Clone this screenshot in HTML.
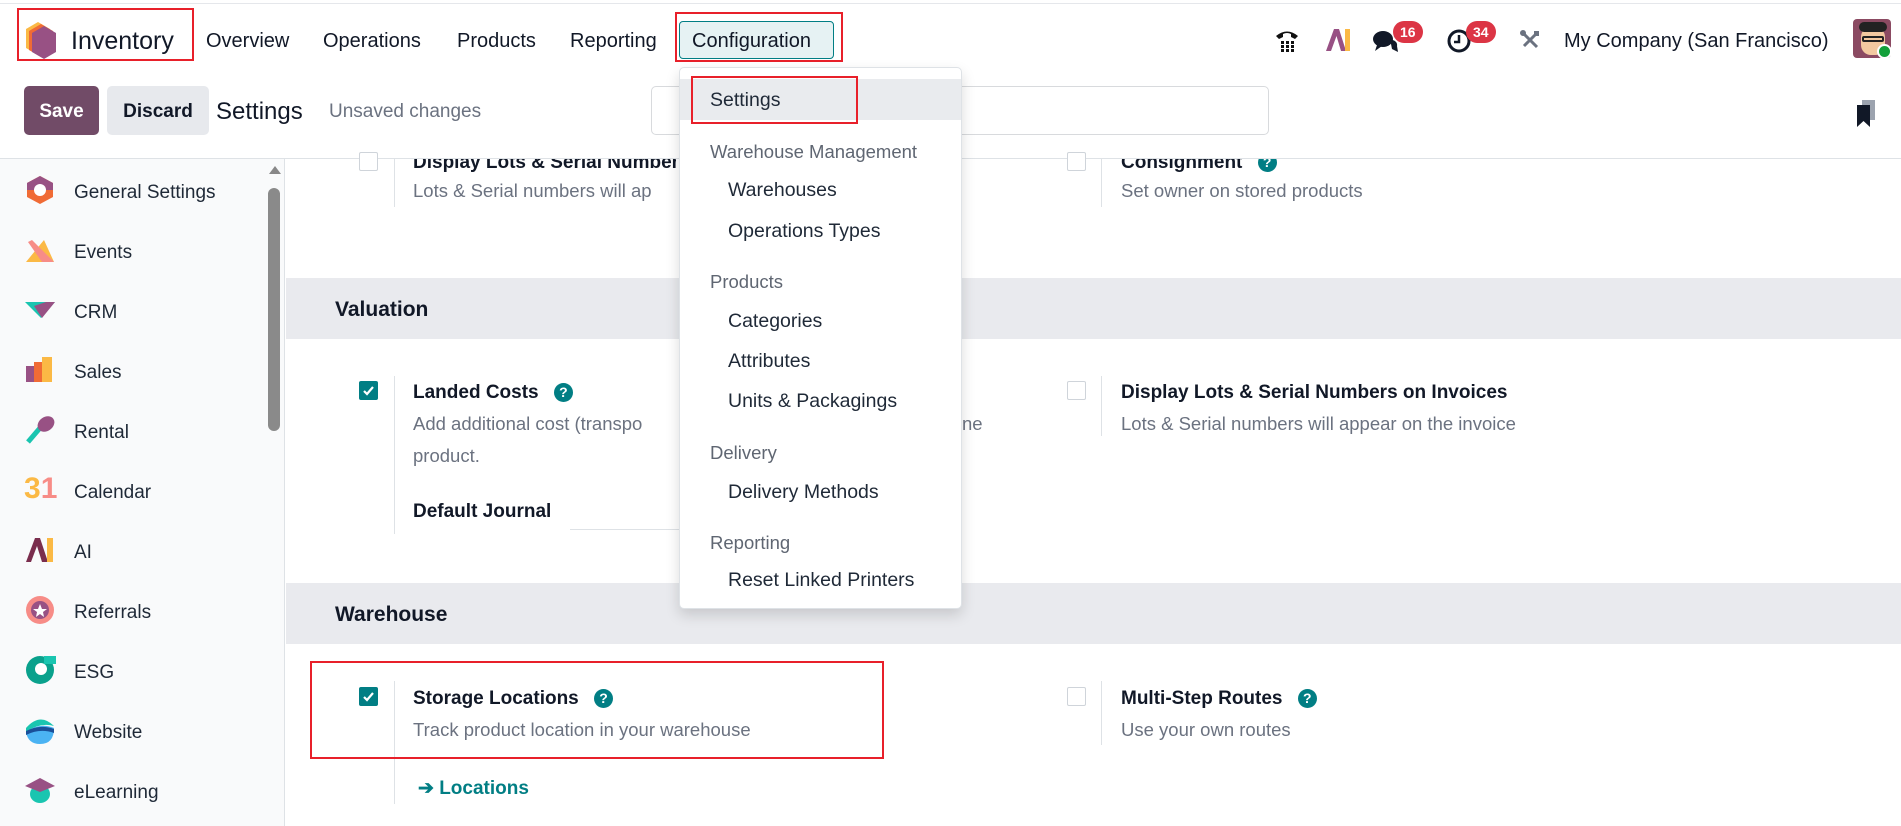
<!DOCTYPE html>
<html><head><meta charset="utf-8"><style>
*{margin:0;padding:0;box-sizing:border-box}
body{width:1901px;height:826px;overflow:hidden;background:#fff;font-family:"Liberation Sans",sans-serif;color:#1f2937;position:relative}
.a{position:absolute;white-space:nowrap}
.nav{font-size:20px;color:#111827;top:30px}
.red{position:absolute;border:2px solid #e8202a}
.side{position:absolute;left:0;top:159px;width:285px;height:667px;background:#f9fafb;border-right:1px solid #dee2e6}
.si{position:absolute;left:74px;font-size:19px;color:#1f2937}
.ic{position:absolute;left:24px;width:32px;height:32px}
.band{position:absolute;left:286px;right:0;height:61px;background:#e9eaee}
.band span{position:absolute;left:49px;top:20px;font-size:21px;font-weight:bold;color:#111827}
.cb{position:absolute;width:19px;height:19px;border:1px solid #cfd4da;background:#fff;border-radius:2px}
.cb.on{background:#017e84;border-color:#017e84}
.vl{position:absolute;width:1px;background:#dee2e6}
.t{position:absolute;font-size:19px;font-weight:bold;color:#111827;white-space:nowrap}
.d{position:absolute;font-size:18.5px;color:#6b7280;white-space:nowrap;line-height:32px}
.q{display:inline-block;width:19px;height:19px;border-radius:50%;background:#017e84;color:#fff;font-size:14px;text-align:center;line-height:19px;margin-left:10px;vertical-align:1px}
.dd{position:absolute;left:679px;top:67px;width:283px;height:542px;background:#fff;border:1px solid #dee2e6;border-radius:5px;box-shadow:0 6px 14px rgba(0,0,0,.15)}
.dh{position:absolute;left:30px;font-size:18.5px;color:#5f6672}
.di{position:absolute;left:48px;font-size:19.5px;color:#1f2937}
.badge{position:absolute;background:#dc3545;color:#fff;font-size:14px;font-weight:bold;border-radius:12px;height:22px;line-height:22px;padding:0 7px}
</style></head><body>
<div class="a" style="left:0;top:3px;width:1901px;height:1px;background:#e5e7eb"></div>
<svg class="a" style="left:24px;top:20px" width="34" height="40" viewBox="0 0 34 40"><polygon points="14,2 26,9 26,28 14,35 2,28 2,9" fill="#fbb945"/><polygon points="17,4 29,11 29,30 17,37 5,30 5,11" fill="#f06b35"/><polygon points="20,6 32,13 32,32 20,39 8,32 8,13" fill="#985184"/></svg>
<div class="a" style="left:71px;top:27px;font-size:25px;color:#111827">Inventory</div>
<div class="red" style="left:17px;top:8px;width:177px;height:53px"></div>
<div class="a nav" style="left:206px">Overview</div>
<div class="a nav" style="left:323px">Operations</div>
<div class="a nav" style="left:457px">Products</div>
<div class="a nav" style="left:570px">Reporting</div>
<div class="a" style="left:679px;top:21px;width:155px;height:38px;background:#e6f2f3;border:1px solid #017e84;border-radius:4px"></div>
<div class="a nav" style="left:692px">Configuration</div>
<div class="red" style="left:675px;top:12px;width:168px;height:50px"></div>
<svg class="a" style="left:1274px;top:27px" width="26" height="26" viewBox="0 0 26 26"><path d="M2 9 Q13 0 24 9 L21 12 L17 10 L17 7 Q13 5 9 7 L9 10 L5 12 Z" fill="#111"/><g fill="#111"><rect x="7" y="14" width="3" height="3"/><rect x="12" y="14" width="3" height="3"/><rect x="17" y="14" width="3" height="3"/><rect x="7" y="18" width="3" height="3"/><rect x="12" y="18" width="3" height="3"/><rect x="17" y="18" width="3" height="3"/><rect x="7" y="22" width="3" height="3"/><rect x="12" y="22" width="3" height="3"/><rect x="17" y="22" width="3" height="3"/></g></svg>
<svg class="a" style="left:1325px;top:28px" width="26" height="24" viewBox="0 0 26 24"><path d="M1 23 L9 1 L14 1 L21 23 L16 23 L11.5 8 L6 23 Z" fill="#985184"/><rect x="20" y="1" width="5" height="22" fill="#fbb945"/></svg>
<svg class="a" style="left:1372px;top:29px" width="28" height="24" viewBox="0 0 28 24"><ellipse cx="11" cy="10" rx="10" ry="8" fill="#111827"/><path d="M5 16 L3 22 L10 17Z" fill="#111827"/><path d="M18 10 Q26 12 25 17 L26 23 L20 20Z" fill="#111827"/></svg>
<div class="badge" style="left:1393px;top:21px">16</div>
<svg class="a" style="left:1446px;top:28px" width="26" height="26" viewBox="0 0 26 26"><circle cx="13" cy="13" r="10" fill="none" stroke="#111827" stroke-width="3"/><path d="M13 7 V14 H8" fill="none" stroke="#111827" stroke-width="2.5"/></svg>
<div class="badge" style="left:1466px;top:21px">34</div>
<svg class="a" style="left:1519px;top:29px" width="22" height="22" viewBox="0 0 22 22"><path d="M4 4 L18 18" stroke="#6b7280" stroke-width="3"/><path d="M18 4 L5 17" stroke="#6b7280" stroke-width="3"/><circle cx="4" cy="4" r="3" fill="#6b7280"/><rect x="15" y="2" width="5" height="5" fill="#6b7280"/></svg>
<div class="a" style="left:1564px;top:30px;font-size:20px;color:#111827">My Company (San Francisco)</div>
<div class="a" style="left:1853px;top:19px;width:38px;height:39px;background:#8b4a62;border-radius:4px;overflow:hidden"><div style="position:absolute;left:8px;top:8px;width:24px;height:28px;background:#f3c9a0;border-radius:10px"></div><div style="position:absolute;left:6px;top:3px;width:28px;height:10px;background:#222;border-radius:6px"></div><div style="position:absolute;left:9px;top:17px;width:22px;height:6px;border:2px solid #222;border-radius:2px"></div></div>
<div class="a" style="left:1877px;top:44px;width:15px;height:15px;border-radius:50%;background:#12a03a;border:2px solid #fff"></div>
<div class="a" style="left:24px;top:86px;width:75px;height:49px;background:#714b67;border-radius:5px;color:#fff;font-weight:bold;font-size:19px;text-align:center;line-height:51px">Save</div>
<div class="a" style="left:107px;top:86px;width:102px;height:49px;background:#e7e9ed;border-radius:5px;color:#111827;font-weight:bold;font-size:19px;text-align:center;line-height:51px">Discard</div>
<div class="a" style="left:216px;top:98px;font-size:24px;color:#111827">Settings</div>
<div class="a" style="left:329px;top:101px;font-size:19px;color:#6b7280">Unsaved changes</div>
<div class="a" style="left:651px;top:86px;width:618px;height:49px;border:1px solid #d8dadd;border-radius:5px"></div>
<svg class="a" style="left:1855px;top:100px" width="22" height="28" viewBox="0 0 22 28"><rect x="7" y="0" width="13" height="20" fill="#9ca3af"/><path d="M2 5 H15 V27 L8.5 21 L2 27Z" fill="#111827"/></svg>
<div class="a" style="left:0;top:158px;width:1901px;height:1px;background:#dee2e6"></div>
<div class="side">
<svg class="a" style="left:269px;top:7px" width="12" height="8"><polygon points="6,0 12,8 0,8" fill="#888"/></svg>
<div class="a" style="left:268px;top:29px;width:12px;height:243px;background:#8a8a8a;border-radius:6px"></div>
</div>
<svg class="ic" style="top:174px" viewBox="0 0 32 32"><polygon points="16,2 29,9 29,23 16,30 3,23 3,9" fill="#f06b35"/><polygon points="16,2 29,9 29,16 3,16 3,9" fill="#985184"/><circle cx="16" cy="16" r="6" fill="#fff"/></svg><div class="si" style="top:182px">General Settings</div>
<svg class="ic" style="top:234px" viewBox="0 0 32 32"><path d="M2 28 L20 6 L30 28Z" fill="#fbb945"/><path d="M8 6 L30 28 L18 28 L4 8Z" fill="#f78c87"/></svg><div class="si" style="top:242px">Events</div>
<svg class="ic" style="top:294px" viewBox="0 0 32 32"><path d="M1 8 L31 8 L17 24Z" fill="#1ac5b0"/><path d="M10 12 L22 8 L31 8 L18 24 Z" fill="#985184"/></svg><div class="si" style="top:302px">CRM</div>
<svg class="ic" style="top:354px" viewBox="0 0 32 32"><rect x="2" y="12" width="10" height="16" fill="#985184"/><rect x="10" y="8" width="10" height="20" fill="#f06b35"/><rect x="18" y="3" width="10" height="25" fill="#fbb945"/></svg><div class="si" style="top:362px">Sales</div>
<svg class="ic" style="top:414px" viewBox="0 0 32 32"><path d="M4 28 L16 14" stroke="#1ac5b0" stroke-width="5"/><ellipse cx="22" cy="10" rx="9" ry="7" fill="#985184" transform="rotate(-35 22 10)"/></svg><div class="si" style="top:422px">Rental</div>
<div class="a" style="left:24px;top:472px;font-size:30px;font-weight:bold;color:#fbb945">3<span style="color:#f78c87">1</span></div><div class="si" style="top:482px">Calendar</div>
<svg class="ic" style="top:534px" viewBox="0 0 32 32"><path d="M2 28 L11 4 L16 4 L24 28 L18 28 L13 12 L7 28Z" fill="#7a2d4d"/><rect x="23" y="4" width="6" height="24" fill="#fbb945"/></svg><div class="si" style="top:542px">AI</div>
<svg class="ic" style="top:594px" viewBox="0 0 32 32"><circle cx="16" cy="16" r="14" fill="#f78c87"/><circle cx="16" cy="16" r="9" fill="#985184"/><polygon points="16,10 18,15 23,15 19,18 20,23 16,20 12,23 13,18 9,15 14,15" fill="#fff"/></svg><div class="si" style="top:602px">Referrals</div>
<svg class="ic" style="top:654px" viewBox="0 0 32 32"><circle cx="16" cy="16" r="14" fill="#0aa18c"/><circle cx="17" cy="15" r="6" fill="#fff"/><rect x="20" y="2" width="12" height="8" fill="#1ac5b0"/></svg><div class="si" style="top:662px">ESG</div>
<svg class="ic" style="top:714px" viewBox="0 0 32 32"><path d="M2 14 Q16 -2 30 12 Q16 8 2 18Z" fill="#1ac5b0"/><path d="M2 18 Q16 8 30 14 Q30 30 16 30 Q4 30 2 18Z" fill="#4bb3f3"/><path d="M2 17 Q16 10 30 15 L30 19 Q16 14 2 21Z" fill="#1a4f99"/></svg><div class="si" style="top:722px">Website</div>
<svg class="ic" style="top:774px" viewBox="0 0 32 32"><ellipse cx="16" cy="20" rx="10" ry="9" fill="#1ac5b0"/><polygon points="1,12 16,4 31,12 16,18" fill="#985184"/></svg><div class="si" style="top:782px">eLearning</div>
<div class="cb" style="left:359px;top:152px"></div>
<div class="vl" style="left:394px;top:159px;height:48px"></div>
<div class="a" style="left:286px;top:159px;width:390px;height:30px;overflow:hidden"><div class="t" style="left:127px;top:-7px">Display Lots &amp; Serial Numbers on Invoices</div></div>
<div class="d" style="left:413px;top:175px">Lots &amp; Serial numbers will ap</div>
<div class="cb" style="left:1067px;top:152px"></div>
<div class="vl" style="left:1101px;top:159px;height:48px"></div>
<div class="a" style="left:1110px;top:159px;width:300px;height:30px;overflow:hidden"><div class="t" style="left:11px;top:-7px">Consignment <span class="q">?</span></div></div>
<div class="d" style="left:1121px;top:175px">Set owner on stored products</div>
<div class="band" style="top:278px"><span>Valuation</span></div>
<div class="cb on" style="left:359px;top:381px"><svg width="17" height="17" viewBox="0 0 17 17"><path d="M4 9 L7 12 L13 5" stroke="#fff" stroke-width="2.2" fill="none"/></svg></div>
<div class="vl" style="left:394px;top:376px;height:158px"></div>
<div class="t" style="left:413px;top:382px">Landed Costs <span class="q">?</span></div>
<div class="d" style="left:413px;top:408px">Add additional cost (transpo</div>
<div class="d" style="left:962px;top:408px">ne</div>
<div class="d" style="left:413px;top:440px">product.</div>
<div class="t" style="left:413px;top:501px">Default Journal</div>
<div class="a" style="left:570px;top:529px;width:110px;height:1px;background:#dee2e6"></div>
<div class="cb" style="left:1067px;top:381px"></div>
<div class="vl" style="left:1101px;top:376px;height:60px"></div>
<div class="t" style="left:1121px;top:382px">Display Lots &amp; Serial Numbers on Invoices</div>
<div class="d" style="left:1121px;top:408px">Lots &amp; Serial numbers will appear on the invoice</div>
<div class="band" style="top:583px"><span>Warehouse</span></div>
<div class="cb on" style="left:359px;top:687px"><svg width="17" height="17" viewBox="0 0 17 17"><path d="M4 9 L7 12 L13 5" stroke="#fff" stroke-width="2.2" fill="none"/></svg></div>
<div class="vl" style="left:394px;top:681px;height:123px"></div>
<div class="t" style="left:413px;top:688px">Storage Locations <span class="q">?</span></div>
<div class="d" style="left:413px;top:714px">Track product location in your warehouse</div>
<div class="a" style="left:418px;top:777px;font-size:19px;font-weight:bold;color:#017e84">➔ Locations</div>
<div class="red" style="left:310px;top:661px;width:574px;height:98px"></div>
<div class="cb" style="left:1067px;top:687px"></div>
<div class="vl" style="left:1101px;top:681px;height:64px"></div>
<div class="t" style="left:1121px;top:688px">Multi-Step Routes <span class="q">?</span></div>
<div class="d" style="left:1121px;top:714px">Use your own routes</div>
<div class="dd">
<div class="a" style="left:0;top:11px;width:281px;height:41px;background:#e9ebee"></div>
<div class="di" style="left:30px;top:21px">Settings</div>
<div class="dh" style="top:73px">Warehouse Management</div>
<div class="di" style="top:111px">Warehouses</div>
<div class="di" style="top:152px">Operations Types</div>
<div class="dh" style="top:203px">Products</div>
<div class="di" style="top:242px">Categories</div>
<div class="di" style="top:282px">Attributes</div>
<div class="di" style="top:322px">Units &amp; Packagings</div>
<div class="dh" style="top:374px">Delivery</div>
<div class="di" style="top:413px">Delivery Methods</div>
<div class="dh" style="top:464px">Reporting</div>
<div class="di" style="top:501px">Reset Linked Printers</div>
</div>
<div class="red" style="left:691px;top:76px;width:167px;height:48px"></div>
</body></html>
